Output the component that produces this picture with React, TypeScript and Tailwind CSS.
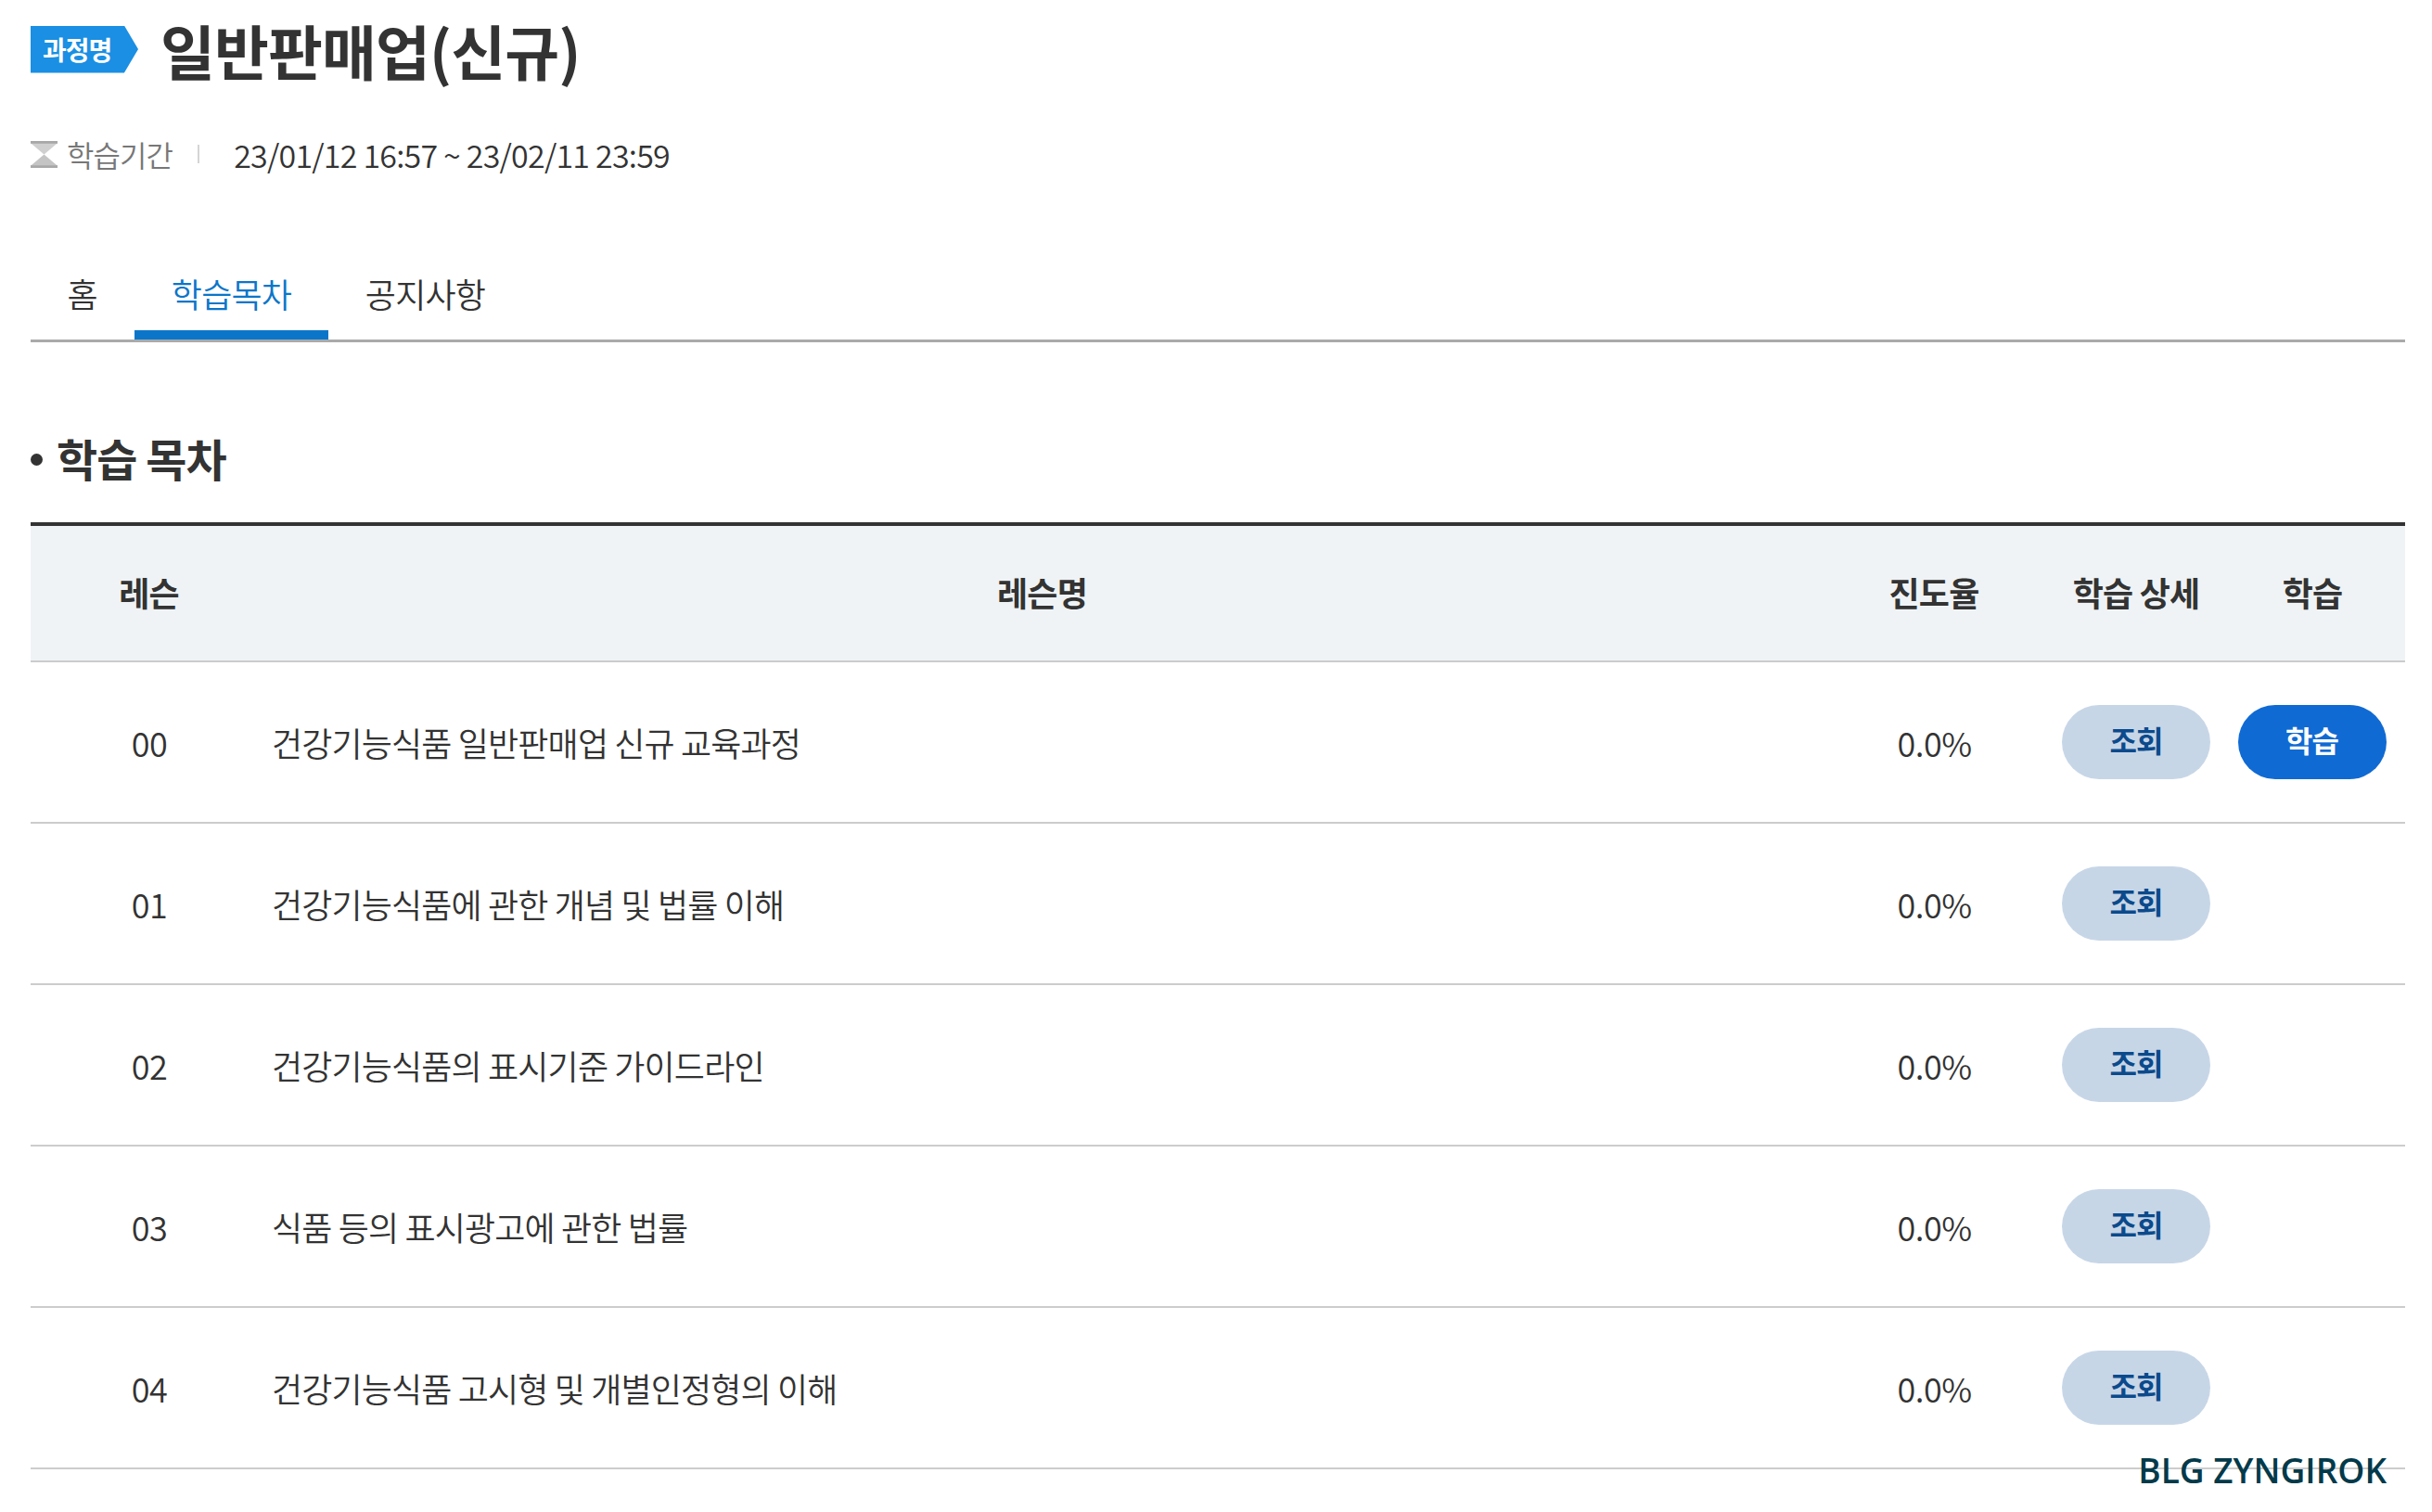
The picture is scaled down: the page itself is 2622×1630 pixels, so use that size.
const KR = "font-['Noto_Sans_CJK_KR','Noto_Sans',sans-serif]";

const rows = [
  { no: "00", name: "건강기능식품 일반판매업 신규 교육과정", learn: true },
  { no: "01", name: "건강기능식품에 관한 개념 및 법률 이해", learn: false },
  { no: "02", name: "건강기능식품의 표시기준 가이드라인", learn: false },
  { no: "03", name: "식품 등의 표시광고에 관한 법률", learn: false },
  { no: "04", name: "건강기능식품 고시형 및 개별인정형의 이해", learn: false },
];

function Hourglass() {
  return (
    <svg width="29" height="29" viewBox="0 0 30 30" className="shrink-0">
      <rect x="0" y="0" width="30" height="3" fill="#a8a8a8" />
      <rect x="0" y="27" width="30" height="3" fill="#a8a8a8" />
      <polygon points="1,3 29,3 15,15" fill="#cfcfcf" />
      <polygon points="15,15 29,27 1,27" fill="#c4c4c4" />
    </svg>
  );
}

export default function App() {
  return (
    <div className={`${KR} relative h-[1630px] w-[2622px] overflow-hidden bg-white pl-[33px] pr-[29px] text-[#333333]`}>
      <div className="flex h-[112px] items-center pb-[6px]">
        <div className="flex h-[51px] w-[116px] items-center bg-[#1a8fe3] pl-[13px] text-[28px] font-bold tracking-[-1px] text-white [clip-path:polygon(0_0,87%_0,100%_50%,87%_100%,0_100%)]">
          과정명
        </div>
        <h1 className="ml-[24px] text-[64px] leading-none font-bold tracking-[-0.9px]">일반판매업(신규)</h1>
      </div>

      <div className="mt-[30px] flex h-[48px] items-center">
        <Hourglass />
        <span className="ml-[10px] text-[32px] font-[350] tracking-[-0.9px] text-[#777777]">학습기간</span>
        <span className="mr-[37px] ml-[27px] h-[20px] w-[2px] bg-[#d5d5d5]" />
        <span className="text-[34px] font-[350] tracking-[-0.78px]">23/01/12 16:57 ~ 23/02/11 23:59</span>
      </div>

      <div className="mt-[92px] flex h-[87px] border-b-[3px] border-[#aaaaaa]">
        <div className="flex w-[112px] items-center justify-center pb-[16px] text-[36px] font-[350]">홈</div>
        <div className="relative flex w-[209px] items-center justify-center pb-[16px] text-[36px] font-[350] tracking-[-0.8px] text-[#0b76c9]">
          학습목차
          <span className="absolute right-0 bottom-0 left-0 h-[10px] bg-[#0b76c9]" />
        </div>
        <div className="flex w-[209px] items-center justify-center pb-[16px] text-[36px] font-[350] tracking-[-0.8px]">공지사항</div>
      </div>

      <h2 className="mt-[99px] flex h-[50px] items-center text-[48px] font-bold tracking-[-1px]">
        <span className="mt-[4px] mr-[15px] h-[13px] w-[13px] rounded-full bg-[#333333]" />
        학습 목차
      </h2>

      <div className="mt-[45px] grid h-[151px] grid-cols-[254px_1673px_250px_186px_193px] items-center border-t-[4px] border-b-[2px] border-t-[#333333] border-b-[#cccccc] bg-[#eff3f6] pb-[3px] text-center text-[36px] font-bold tracking-[-0.8px]">
        <div className="pl-[1px]">레슨</div>
        <div>레슨명</div>
        <div>진도율</div>
        <div>학습 상세</div>
        <div className="pl-[1px]">학습</div>
      </div>

      {rows.map((r) => (
        <div
          key={r.no}
          className="grid h-[174px] grid-cols-[254px_1673px_250px_186px_193px] items-center border-b-[2px] border-[#cccccc] text-[36px] font-[350]"
        >
          <div className="pl-[2px] pb-[1px] text-center tracking-[-0.5px]">{r.no}</div>
          <div className="pl-[6px] pb-[1px] tracking-[-0.85px]">{r.name}</div>
          <div className="pl-[1px] pb-[1px] text-center tracking-[-0.5px]">0.0%</div>
          <div className="flex justify-center">
            <button className="h-[80px] w-[160px] rounded-[40px] bg-[#c7d6e7] pb-[6px] text-[32px] font-bold tracking-[-1px] text-[#0b4a8c]">조회</button>
          </div>
          <div className="flex justify-center">
            {r.learn && (
              <button className="h-[80px] w-[160px] rounded-[40px] bg-[#106ad3] pb-[6px] text-[32px] font-bold tracking-[-1px] text-white">학습</button>
            )}
          </div>
        </div>
      ))}

      <div className="absolute right-[49px] bottom-[27px] font-['Open_Sans',sans-serif] text-[37px] leading-none font-semibold text-[#033a4a]">
        BLG ZYNGIROK
      </div>
    </div>
  );
}
